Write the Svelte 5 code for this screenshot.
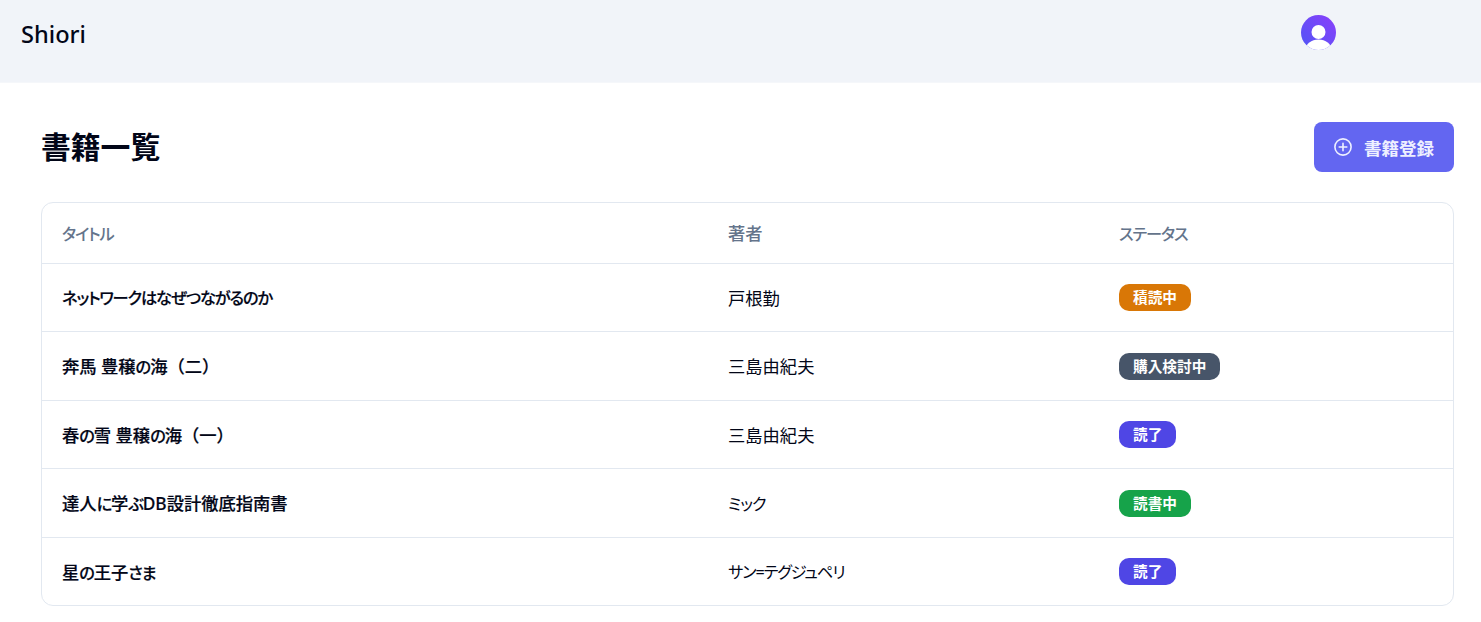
<script>
    const books = [
        { title: 'ネットワークはなぜつながるのか', author: '戸根勤', status: '積読中', kind: 'stacked' },
        { title: '奔馬 豊穣の海（二）', author: '三島由紀夫', status: '購入検討中', kind: 'considering' },
        { title: '春の雪 豊穣の海（一）', author: '三島由紀夫', status: '読了', kind: 'done' },
        { title: '達人に学ぶDB設計徹底指南書', author: 'ミック', status: '読書中', kind: 'reading' },
        { title: '星の王子さま', author: 'サン=テグジュペリ', status: '読了', kind: 'done' }
    ];

    // kana runs get their own span, they are set tighter than the kanji
    function runs(text) {
        return text.split(/([\u3040-\u30ff=]+)/).filter(Boolean).map((part) => ({
            part,
            kana: /^[\u3040-\u30ff=]/.test(part)
        }));
    }
</script>

{#snippet jp(text)}
    {#each runs(text) as run}{#if run.kana}<span class="kana">{run.part}</span>{:else}{run.part}{/if}{/each}
{/snippet}

<header class="navbar">
    <span class="brand">Shiori</span>
    <div class="avatar">
        <svg viewBox="0 0 35 35" width="35" height="35" aria-hidden="true">
            <defs>
                <linearGradient id="avatar-grad" x1="0" y1="1" x2="1" y2="0">
                    <stop offset="0" stop-color="#4f56f5" />
                    <stop offset="1" stop-color="#8b3ffb" />
                </linearGradient>
                <clipPath id="avatar-clip"><circle cx="17.5" cy="17.5" r="17.5" /></clipPath>
            </defs>
            <circle cx="17.5" cy="17.5" r="17.5" fill="url(#avatar-grad)" />
            <g clip-path="url(#avatar-clip)" fill="#fff">
                <circle cx="17.5" cy="17" r="7" />
                <ellipse cx="17.5" cy="35" rx="13" ry="10.5" />
            </g>
        </svg>
    </div>
</header>

<main class="page">
    <div class="page-head">
        <h1>書籍一覧</h1>
        <button class="add-button">
            <svg viewBox="0 0 18 18" width="18" height="18" fill="none" stroke="currentColor" stroke-width="1.6" stroke-linecap="round" aria-hidden="true">
                <circle cx="9" cy="9" r="8.1" />
                <path d="M9 5.2v7.6M5.2 9h7.6" />
            </svg>
            <span>書籍登録</span>
        </button>
    </div>

    <div class="table-card">
        <table>
            <thead>
                <tr>
                    <th class="col-title">{@render jp('タイトル')}</th>
                    <th class="col-author">著者</th>
                    <th>{@render jp('ステータス')}</th>
                </tr>
            </thead>
            <tbody>
                {#each books as book}
                    <tr>
                        <td class="title">{@render jp(book.title)}</td>
                        <td>{@render jp(book.author)}</td>
                        <td><span class="badge {book.kind}">{book.status}</span></td>
                    </tr>
                {/each}
            </tbody>
        </table>
    </div>
</main>

<style>
    :global(body) {
        background: #fff;
        color: #0f172a;
        font-family: 'Noto Sans', 'Noto Sans CJK JP', sans-serif;
    }

    .navbar {
        height: 83px;
        box-sizing: border-box;
        background: #f1f4f9;
        border-bottom: 1px solid #f5f7fa;
        display: flex;
        justify-content: space-between;
        padding: 15px 145px 0 21px;
    }

    .brand {
        font-size: 23.6px;
        line-height: 38px;
        font-weight: 500;
        color: #020617;
    }

    .avatar {
        width: 35px;
        height: 35px;
    }

    .page {
        padding: 39px 27px 0 41px;
    }

    .page-head {
        display: flex;
        justify-content: space-between;
        align-items: center;
        height: 50px;
        margin-bottom: 30px;
    }

    h1 {
        margin: 0;
        font-size: 29.8px;
        font-weight: 700;
        line-height: 50px;
        color: #020617;
    }

    .add-button {
        width: 140px;
        height: 50px;
        border: none;
        border-radius: 8px;
        background: #6366f1;
        color: #eef0ff;
        font-family: inherit;
        font-size: 17.5px;
        font-weight: 700;
        display: flex;
        align-items: center;
        justify-content: center;
        gap: 12px;
        padding: 0;
    }

    .table-card {
        border: 1px solid #e2e8f0;
        border-radius: 12px;
        overflow: hidden;
    }

    table {
        width: 100%;
        border-collapse: collapse;
        table-layout: fixed;
        font-size: 17.3px;
    }

    .kana {
        font-size: 16.2px;
        letter-spacing: -1.1px;
        font-feature-settings: 'palt';
    }

    th {
        height: 60px;
        padding: 0 20px;
        text-align: left;
        font-size: 17.3px;
        font-weight: 500;
        color: #64748b;
        box-sizing: border-box;
    }

    .col-title {
        width: 666px;
    }

    .col-author {
        width: 391px;
    }

    td {
        height: 68px;
        padding: 0 20px;
        box-sizing: border-box;
        border-top: 1px solid #e2e8f0;
        color: #020617;
        vertical-align: middle;
    }

    tbody tr:nth-child(even) td {
        height: 69px;
    }

    tbody tr:nth-child(even) td:last-child {
        padding-top: 1px;
    }

    td.title {
        font-weight: 500;
        -webkit-text-stroke: 0.2px #020617;
    }

    .badge {
        display: inline-block;
        height: 27px;
        line-height: 27px;
        padding: 0 14px;
        border-radius: 10px;
        font-size: 14.67px;
        font-weight: 700;
        color: #fff;
        vertical-align: middle;
    }

    .stacked {
        background: #d97706;
    }

    .considering {
        background: #475569;
    }

    .done {
        background: #4f46e5;
    }

    .reading {
        background: #16a34a;
    }
</style>
